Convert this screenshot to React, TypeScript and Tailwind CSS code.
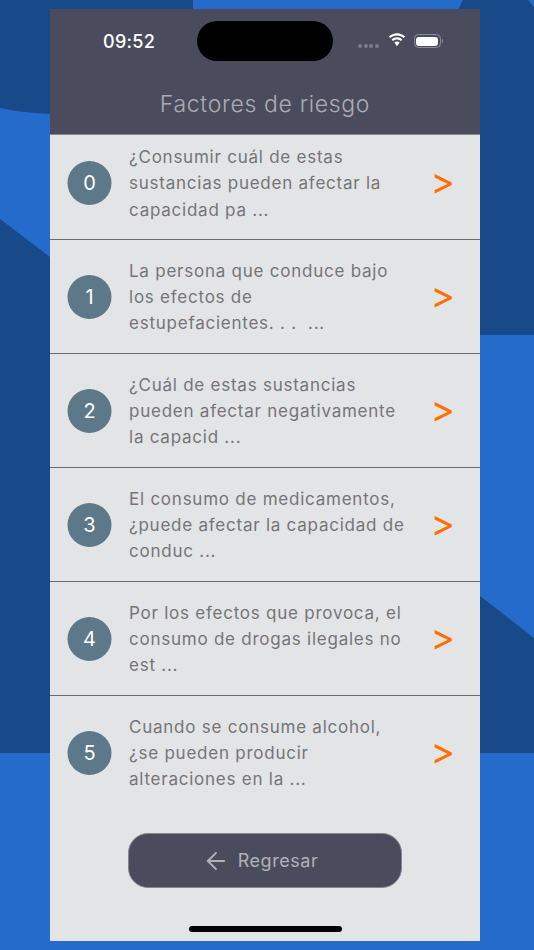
import React from "react";
import { ArrowLeft } from "lucide-react";

const rows: { n: number; lines: string[] }[] = [
  { n: 0, lines: ["¿Consumir cuál de estas", "sustancias pueden afectar la", "capacidad pa ..."] },
  { n: 1, lines: ["La persona que conduce bajo", "los efectos de", "estupefacientes. . .  ..."] },
  { n: 2, lines: ["¿Cuál de estas sustancias", "pueden afectar negativamente", "la capacid ..."] },
  { n: 3, lines: ["El consumo de medicamentos,", "¿puede afectar la capacidad de", "conduc ..."] },
  { n: 4, lines: ["Por los efectos que provoca, el", "consumo de drogas ilegales no", "est ..."] },
  { n: 5, lines: ["Cuando se consume alcohol,", "¿se pueden producir", "alteraciones en la ..."] },
];

function Wallpaper() {
  return (
    <svg className="absolute inset-0" width="534" height="950" viewBox="0 0 534 950" aria-hidden="true">
      <rect width="534" height="950" fill="#256bcb" />
      <path d="M0 0H193V20H50V114C30 113 14 111 0 108Z" fill="#184988" />
      <path d="M0 219L50 257V753H0Z" fill="#184988" />
      <path d="M463 0L456 14V335H534V7L528 0Z" fill="#184988" />
      <path d="M480 596L534 638V753H480Z" fill="#184988" />
    </svg>
  );
}

function Row({ n, lines, first, last }: { n: number; lines: string[]; first: boolean; last: boolean }) {
  return (
    <div
      className={`flex items-center border-[#6b6b6e] ${first ? "h-[105px] pb-2 border-b" : last ? "h-[113px]" : "h-[114px] border-b"}`}
    >
      <div className="ml-[18px] flex h-11 w-11 shrink-0 -translate-x-[0.5px] items-center justify-center rounded-full bg-[#5d7888] text-[20px] text-white">
        {n}
      </div>
      <div className="ml-[17px] flex-1 pt-[1px] text-[17px] leading-[26.33px] tracking-[0.76px] text-[#757577]">
        {lines.map((l) => (
          <div key={l} className="whitespace-pre">
            {l}
          </div>
        ))}
      </div>
      <div className="mb-[5px] mr-[25px] text-[37px] leading-none text-[#ff6f00]">&gt;</div>
    </div>
  );
}

export default function App() {
  return (
    <div className="relative h-[950px] w-[534px] overflow-hidden font-['Inter',sans-serif]">
      <Wallpaper />
      <div className="relative ml-[50px] mt-[9px] flex h-[932px] w-[430px] flex-col bg-[#e3e4e6]">
        <header className="h-[126px] shrink-0 border-b border-[#85868e] bg-[#4a4c5e]">
          <div className="flex h-[62px] items-start">
            <div className="ml-[53px] mt-[22px] w-[52px] text-[18px] font-medium leading-[22px] tracking-[0.3px] text-white">09:52</div>
            <div className="ml-[42px] mt-3 h-10 w-[136px] rounded-full bg-black" />
            <div className="ml-[25px] mt-[25px] flex items-center">
              <div className="mt-[10px] flex gap-[1.5px]">
                <span className="h-[4px] w-[4px] rounded-full bg-[#7b7c88]" />
                <span className="h-[4px] w-[4px] rounded-full bg-[#7b7c88]" />
                <span className="h-[4px] w-[4px] rounded-full bg-[#7b7c88]" />
                <span className="h-[4px] w-[4px] rounded-full bg-[#7b7c88]" />
              </div>
              <svg className="ml-[9px] -translate-y-[1px]" width="18" height="14" viewBox="0 0 18 14">
                <path d="M9 2.4c2.6 0 5 1 6.8 2.7L17.2 3.6C15 1.5 12.1.2 9 .2S3 1.5.8 3.6l1.4 1.5C4 3.4 6.4 2.4 9 2.4Z" fill="#fff" />
                <path d="M9 6.4c1.5 0 2.9.6 4 1.6l1.4-1.5C12.9 5.1 11 4.2 9 4.2S5.1 5.1 3.6 6.5L5 8c1.1-1 2.5-1.6 4-1.6Z" fill="#fff" />
                <path d="M9 8.4c-1 0-1.9.4-2.6 1L9 13.2l2.6-3.8c-.7-.6-1.6-1-2.6-1Z" fill="#fff" />
              </svg>
              <div className="ml-[8px] flex items-center">
                <div className="h-[14px] w-[27px] rounded-[4.5px] border border-[#8b8c96] p-[1.5px]">
                  <div className="h-full w-full rounded-[3px] bg-white" />
                </div>
                <div className="ml-[1px] h-[4px] w-[1.5px] rounded-r-full bg-[#8b8c96]" />
              </div>
            </div>
          </div>
          <div className="mt-[18px] text-center text-[23px] font-light leading-[30px] tracking-[0.65px] text-[#abacb3]">
            Factores de riesgo
          </div>
        </header>
        {rows.map((r, i) => (
          <Row key={r.n} n={r.n} lines={r.lines} first={i === 0} last={i === rows.length - 1} />
        ))}
        <button className="mx-auto mt-6 flex h-[55px] w-[274px] items-center justify-center rounded-[20px] border border-[#85858f] bg-[#4a4c5e] pr-[10px] text-[18px] tracking-[0.55px] text-[#b0b1b8]">
          <ArrowLeft size={28} strokeWidth={1.7} className="mr-[8px]" />
          Regresar
        </button>
        <div className="mx-auto mt-[38px] h-[6px] w-[153px] rounded-full bg-black" />
      </div>
    </div>
  );
}
